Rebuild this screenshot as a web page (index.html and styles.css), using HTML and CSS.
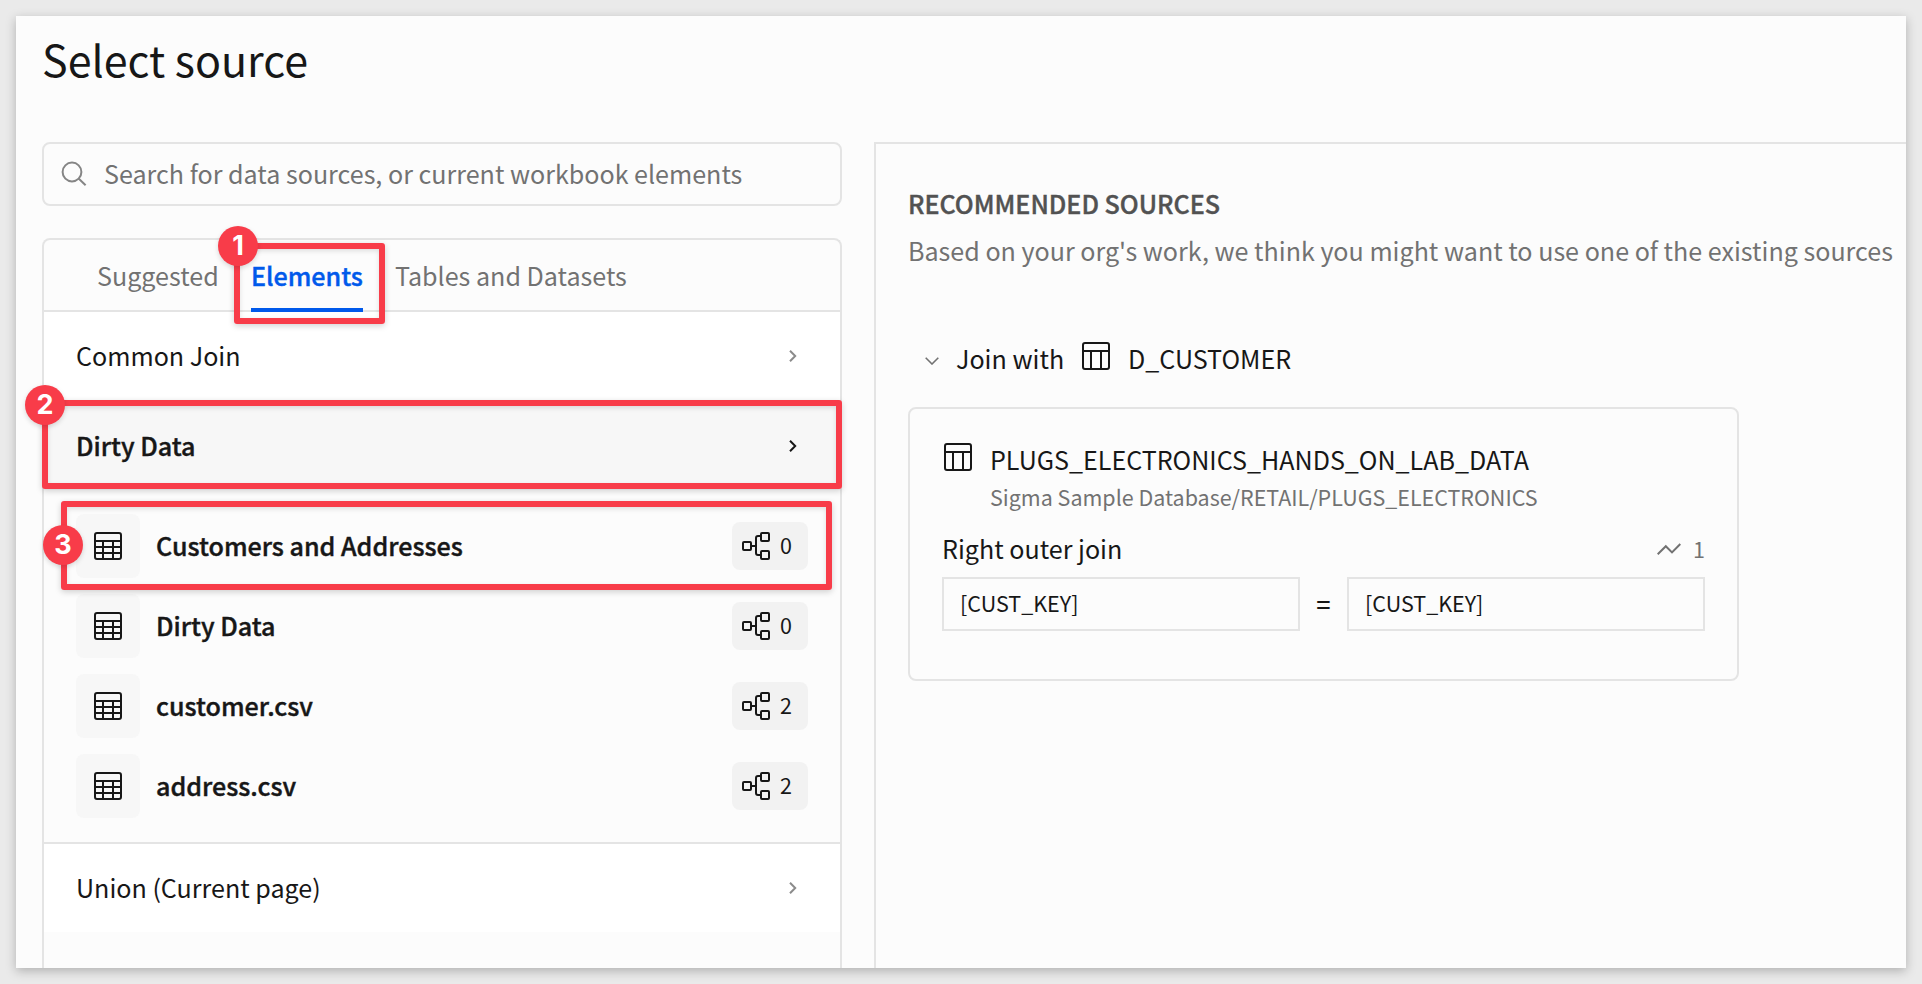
FILE: index.html
```html
<!DOCTYPE html>
<html lang="en">
<head>
<meta charset="utf-8">
<title>Select source</title>
<link rel="stylesheet" href="styles.css">
</head>
<body>
<svg class="sprite" aria-hidden="true">
  <symbol id="grid" viewBox="0 0 28 28"><rect x="1" y="1" width="26" height="26" rx="2"/><path d="M1 9H27M1 15H27M1 21H27M9 9V27M19 9V27"/></symbol>
  <symbol id="table" viewBox="0 0 28 28"><rect x="1" y="1" width="26" height="26" rx="2"/><path d="M1 9H27M9 9V27M19 9V27"/></symbol>
  <symbol id="lineage" viewBox="0 0 28 28"><rect x="1" y="10" width="8" height="8" rx="1"/><rect x="19" y="1" width="8" height="8" rx="1"/><rect x="19" y="19" width="8" height="8" rx="1"/><path d="M9 14H14M19 4H16Q14 4 14 6V21Q14 23 16 23H19"/></symbol>
  <symbol id="chevron" viewBox="0 0 8 12"><path d="M1 .8L6.2 6L1 11.2"/></symbol>
</svg>
<main class="dialog">
  <h1 class="title">Select source</h1>
  <div class="columns">
    <section class="picker">
      <div class="search">
        <svg class="search-icon" viewBox="0 0 26 26"><circle cx="11" cy="11" r="9.4"/><path d="M17.6 17.6L24.6 24.2"/></svg>
        <span class="search-text">Search for data sources, or current workbook elements</span>
      </div>
      <div class="browser">
        <nav class="tabs">
          <span class="tab tab-suggested">Suggested</span>
          <span class="tab tab-active"><b class="tab-label">Elements</b></span>
          <span class="tab tab-tables">Tables and Datasets</span>
          <div class="mark mark-tab"><i class="num">1</i></div>
        </nav>
        <div class="row"><span class="row-name">Common Join</span><svg class="chev"><use href="#chevron"/></svg></div>
        <div class="row row-open"><span class="row-name">Dirty Data</span><svg class="chev"><use href="#chevron"/></svg>
          <div class="mark mark-row"><i class="num">2</i></div>
        </div>
        <div class="items">
          <div class="item"><span class="tile"><svg class="icon"><use href="#grid"/></svg></span><span class="item-name">Customers and Addresses</span><span class="badge"><svg class="icon"><use href="#lineage"/></svg><span class="count">0</span></span>
            <div class="mark mark-item"><i class="num">3</i></div>
          </div>
          <div class="item"><span class="tile"><svg class="icon"><use href="#grid"/></svg></span><span class="item-name">Dirty Data</span><span class="badge"><svg class="icon"><use href="#lineage"/></svg><span class="count">0</span></span></div>
          <div class="item"><span class="tile"><svg class="icon"><use href="#grid"/></svg></span><span class="item-name">customer.csv</span><span class="badge"><svg class="icon"><use href="#lineage"/></svg><span class="count">2</span></span></div>
          <div class="item"><span class="tile"><svg class="icon"><use href="#grid"/></svg></span><span class="item-name">address.csv</span><span class="badge"><svg class="icon"><use href="#lineage"/></svg><span class="count">2</span></span></div>
        </div>
        <div class="row row-last"><span class="row-name">Union (Current page)</span><svg class="chev"><use href="#chevron"/></svg></div>
      </div>
    </section>
    <section class="recommend">
      <h2 class="heading">RECOMMENDED SOURCES</h2>
      <p class="hint">Based on your org's work, we think you might want to use one of the existing sources</p>
      <div class="join-with">
        <svg class="caret" viewBox="0 0 14 8"><path d="M.7 .8L7 7L13.3 .8"/></svg>
        <span class="join-label">Join with</span>
        <svg class="icon"><use href="#table"/></svg>
        <span class="join-table">D_CUSTOMER</span>
      </div>
      <article class="card">
        <div class="card-head"><svg class="icon"><use href="#table"/></svg>
          <div class="card-text"><div class="card-name">PLUGS_ELECTRONICS_HANDS_ON_LAB_DATA</div><div class="card-path">Sigma Sample Database/RETAIL/PLUGS_ELECTRONICS</div></div>
        </div>
        <div class="join-type"><span>Right outer join</span><span class="usage"><svg class="trend" viewBox="0 0 24 12"><path d="M.7 11.3L8.8 3.2L15 9.4L23.3 1"/></svg><span>1</span></span></div>
        <div class="keys"><div class="key">[CUST_KEY]</div><span class="equals">=</span><div class="key">[CUST_KEY]</div></div>
      </article>
    </section>
  </div>
</main>
</body>
</html>
```
FILE: styles.css
```css
* { box-sizing: border-box; }
body { margin: 0; padding: 16px; height: 984px; overflow: hidden; background: #eaeaea; color: #171717; font: 400 25.08px/32px "Noto Sans CJK SC", sans-serif; }
svg { display: block; flex: none; fill: none; stroke: currentColor; stroke-width: 2; }
.sprite { position: absolute; width: 0; height: 0; }
.dialog { height: 952px; padding: 10px 0 0 26px; background: #fcfcfc; box-shadow: 0 3px 10px rgba(0,0,0,.25); display: flex; flex-direction: column; }
.title { margin: 0 0 52px; font-size: 43px; line-height: 64px; font-weight: 400; }
.columns { flex: 1; display: flex; gap: 32px; min-height: 0; }
.picker { width: 800px; display: flex; flex-direction: column; gap: 32px; }
.search { height: 64px; border: 2px solid #e4e4e4; border-radius: 8px; display: flex; align-items: center; gap: 17px; padding: 0 0 1px 17px; color: #727272; }
.search-text { padding-bottom: 1px; }
.search-icon { width: 26px; height: 26px; color: #858585; }
.browser { flex: 1; border: 2px solid #e4e4e4; border-bottom: 0; border-radius: 8px 8px 0 0; }
.tabs { position: relative; height: 72px; border-bottom: 2px solid #e4e4e4; display: flex; padding-left: 53px; color: #727272; white-space: nowrap; }
.tab { height: 72px; line-height: 70px; }
.tab-suggested { width: 154px; }
.tab-active { width: 112px; margin-right: 32px; color: #0059eb; border-bottom: 4px solid #0059eb; border-radius: 3px 3px 0 0; }
.tab-label { font-weight: 500; -webkit-text-stroke: .4px; }
.row { position: relative; height: 88px; background: #fff; display: flex; align-items: center; justify-content: space-between; padding: 0 43px 0 32px; }
.row-open { height: 90px; border-top: 2px solid #e4e4e4; background: #f7f7f7; }
.row-last { height: 90px; border-top: 2px solid #e4e4e4; }
.row-name, .item-name { padding-bottom: 2px; }
.row-open .row-name, .item-name { font-weight: 500; -webkit-text-stroke: .4px; }
.chev { width: 8px; height: 12px; color: #8b8b8b; }
.row-open .chev { color: #171717; }
.items { padding: 24px 32px; display: flex; flex-direction: column; gap: 16px; }
.item { position: relative; display: flex; align-items: center; height: 64px; }
.tile { width: 64px; height: 64px; border-radius: 8px; background: #f7f7f7; display: grid; place-items: center; margin-right: 16px; }
.icon { width: 28px; height: 28px; }
.item-name { flex: 1; }
.badge { width: 76px; height: 48px; border-radius: 8px; background: #f2f2f2; display: flex; align-items: center; gap: 10px; padding-left: 10px; font-size: 21.5px; }
.count { padding-bottom: 2px; }
.mark { position: absolute; border: 6px solid #f83c49; border-radius: 3px; box-shadow: 0 2px 6px rgba(0,0,0,.18), inset 0 2px 5px rgba(0,0,0,.12); z-index: 1; }
.mark-tab { left: 190px; top: 3px; width: 151px; height: 81px; }
.mark-row { left: -2px; top: -2px; width: 800px; height: 89px; }
.mark-item { left: -15px; top: -13px; width: 771px; height: 89px; }
.num { position: absolute; width: 40px; height: 40px; border-radius: 50%; background: #f83c49; color: #fff; font: 700 27px/40px Inter, sans-serif; text-align: center; box-shadow: 0 2px 5px rgba(0,0,0,.15); }
.mark-tab .num { left: -22px; top: -23px; }
.mark-row .num { left: -23px; top: -21.5px; }
.mark-item .num { left: -24px; top: 17.5px; }
.recommend { flex: 1; min-width: 0; border: solid #e4e4e4; border-width: 2px 0 0 2px; padding: 43px 0 0 32px; white-space: nowrap; }
.heading { margin: 0 0 15px; font-size: 25.08px; line-height: 32px; font-weight: 500; -webkit-text-stroke: .4px; color: #525252; }
.hint { margin: 0 0 76px; color: #727272; }
.join-with { display: flex; height: 32px; padding-left: 16.5px; }
.caret { width: 14px; height: 8px; margin: 14.5px 17.5px 0 0; color: #727272; stroke-width: 1.6; }
.join-label { width: 126px; }
.join-table { margin-left: 18px; }
.card { width: 831px; height: 274px; margin-top: 33px; border: 2px solid #e4e4e4; border-radius: 8px; padding: 34px 32px 0; }
.card-head { display: flex; gap: 18px; padding-left: 2px; }
.card-path { margin-top: 8px; font-size: 21.48px; line-height: 28px; color: #727272; }
.join-type { height: 32px; margin-top: 21px; display: flex; justify-content: space-between; }
.usage { display: flex; align-items: center; gap: 12px; padding-top: 1px; font-size: 21.5px; color: #727272; }
.trend { width: 24px; height: 12px; }
.keys { display: flex; align-items: center; justify-content: space-between; margin-top: 13px; }
.equals { padding-bottom: 2px; font-weight: 500; }
.key { width: 358px; height: 54px; border: 2px solid #e4e4e4; padding-left: 16px; font-size: 21.5px; line-height: 48px; }
```
